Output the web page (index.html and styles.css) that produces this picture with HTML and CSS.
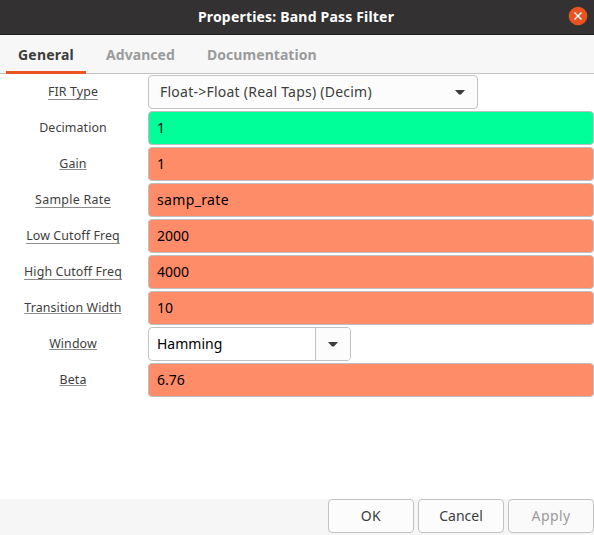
FILE: index.html
```html
<!DOCTYPE html>
<html lang="en">
<head>
<meta charset="utf-8">
<title>Properties: Band Pass Filter</title>
<link rel="stylesheet" href="styles.css">
</head>
<body>
<div class="dialog">
  <header class="titlebar">
    <h1 class="title">Properties: Band Pass Filter</h1>
    <button class="close" aria-label="Close"><svg width="20" height="20" viewBox="0 0 20 20"><circle cx="10" cy="10" r="9.3" fill="#e95420"/><path d="M6.5 6.5l7 7M13.5 6.5l-7 7" stroke="#fff" stroke-width="1.4"/></svg></button>
  </header>
  <nav class="tabs">
    <a class="tab active">General</a>
    <a class="tab">Advanced</a>
    <a class="tab">Documentation</a>
  </nav>
  <main class="form">
    <div class="row"><label class="label hint">FIR Type</label>
      <button class="select"><span class="select-text">Float-&gt;Float (Real Taps) (Decim)</span><svg class="arrow" width="10" height="5" viewBox="0 0 10 5"><path d="M0 0h10L6 4.6H4z" fill="#3d3d3d"/></svg></button></div>
    <div class="row"><label class="label">Decimation</label><div class="field green">1</div></div>
    <div class="row"><label class="label hint">Gain</label><div class="field orange">1</div></div>
    <div class="row"><label class="label hint low wide">Sample Rate</label><div class="field orange spaced">samp_rate</div></div>
    <div class="row"><label class="label hint low">Low Cutoff Freq</label><div class="field orange">2000</div></div>
    <div class="row"><label class="label hint low">High Cutoff Freq</label><div class="field orange">4000</div></div>
    <div class="row"><label class="label hint">Transition Width</label><div class="field orange">10</div></div>
    <div class="row"><label class="label hint">Window</label>
      <div class="combo"><span class="combo-text">Hamming</span><span class="combo-button"><svg class="arrow" width="10" height="5" viewBox="0 0 10 5"><path d="M0 0h10L6 4.6H4z" fill="#3d3d3d"/></svg></span></div></div>
    <div class="row"><label class="label hint">Beta</label><div class="field orange">6.76</div></div>
  </main>
  <footer class="actions">
    <button class="button ok">OK</button>
    <button class="button">Cancel</button>
    <button class="button apply" disabled>Apply</button>
  </footer>
</div>
</body>
</html>
```
FILE: styles.css
```css
* { box-sizing: border-box; }

body {
  margin: 0;
  font: 14px/20px "Noto Sans", sans-serif;
  color: #3d3d3d;
}

button { font: inherit; color: inherit; margin: 0; padding: 0; }

.dialog {
  width: 594px;
  height: 535px;
  display: flex;
  flex-direction: column;
  background: #fff;
  overflow: hidden;
}

.titlebar {
  height: 35px;
  flex: none;
  display: grid;
  grid-template-columns: 26px 1fr 28px;
  align-items: center;
  background: #333131;
  border-bottom: 1px solid #1e1d1d;
}

.title {
  grid-column: 2;
  margin: 0 0 1px;
  font-size: 14px;
  font-weight: 700;
  letter-spacing: 0.19px;
  text-align: center;
  color: #fff;
}

.close { width: 20px; height: 20px; margin: -2px 0 0 2px; border: 0; background: none; }
.close svg { display: block; }

.tabs {
  height: 39px;
  flex: none;
  display: flex;
  gap: 8px;
  padding-left: 6px;
  background: #f7f7f7;
  border-bottom: 1px solid #c3c3c3;
}

.tab {
  height: 39px;
  padding: 10px 12px 0;
  font-weight: 700;
  letter-spacing: 0.06px;
  color: #9b9b9b;
  border-bottom: 3px solid transparent;
}

.tab.active {
  width: 80px;
  color: #3d3d3d;
  border-bottom-color: #e95420;
  letter-spacing: 0.2px;
}

.form {
  flex: 1;
  display: flex;
  flex-direction: column;
  gap: 2px;
  padding-top: 1px;
}

.row { height: 34px; display: flex; align-items: center; }

.label {
  width: 98px;
  margin: 0 26px 0 24px;
  font-size: 12.4px;
  letter-spacing: 0.12px;
  line-height: 18px;
  text-align: center;
  white-space: nowrap;
}

.hint {
  text-decoration: underline 1px #8c8c8c;
  text-decoration-skip-ink: none;
  text-underline-offset: 1px;
}

.hint.low, .row:first-child .hint { text-underline-offset: 3px; }
.label.wide { letter-spacing: 0.3px; }

.field {
  flex: 1;
  height: 34px;
  padding: 6px 8px;
  border: 1px solid #c0bfbf;
  border-radius: 4px;
  color: #000;
}

.green { background: #00ff99; }
.orange { background: #ff8c69; }
.spaced { letter-spacing: 0.35px; }

.select {
  width: 330px;
  height: 34px;
  display: flex;
  align-items: center;
  justify-content: space-between;
  padding: 0 12px 0 11px;
  border: 1px solid #c3c3c3;
  border-radius: 4px;
  background: #fcfcfc;
}

.select-text { letter-spacing: 0.24px; }
.arrow { display: block; }

.combo {
  width: 203px;
  height: 34px;
  display: flex;
  border: 1px solid #c3c3c3;
  border-radius: 4px;
  background: #fff;
  color: #000;
  overflow: hidden;
}

.combo-text { flex: 1; padding: 6px 8px; }

.combo-button {
  width: 35px;
  display: flex;
  align-items: center;
  justify-content: center;
  border-left: 1px solid #c3c3c3;
  background: #fcfcfc;
}

.actions {
  height: 36px;
  flex: none;
  display: flex;
  justify-content: flex-end;
  gap: 4px;
  background: #f6f6f6;
}

.button {
  width: 86px;
  height: 34px;
  border: 1px solid #c3c3c3;
  border-radius: 4px;
  background: #fcfcfc;
}

.ok { letter-spacing: 0.5px; }
.apply { color: #9b9b9b; background: #fafafa; letter-spacing: 0.4px; }
```
